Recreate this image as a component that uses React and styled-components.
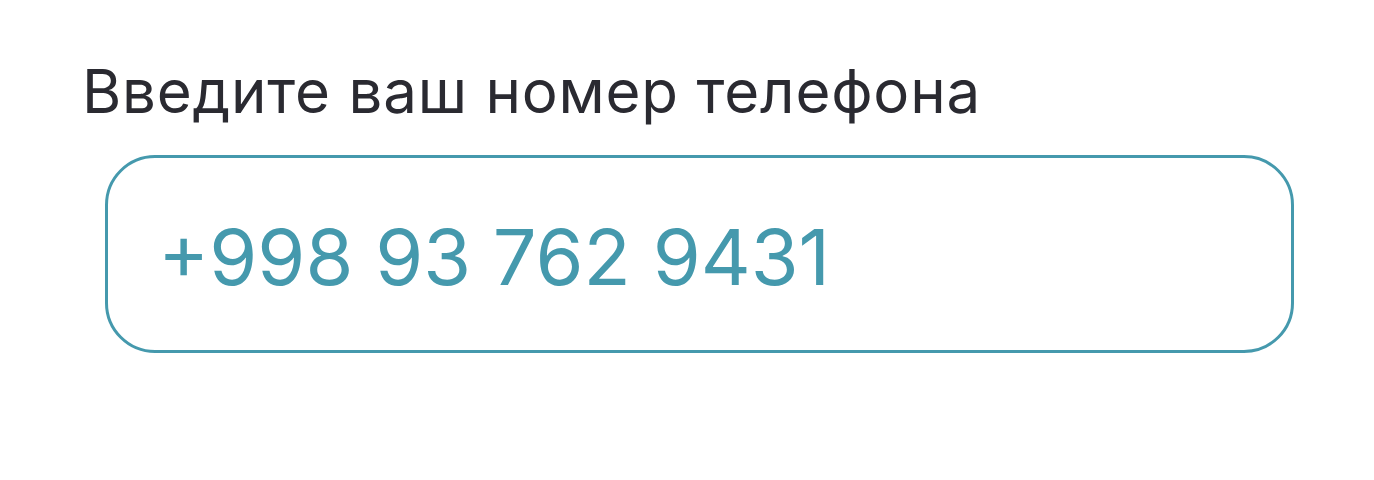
import React from "react";
import styled, { createGlobalStyle } from "styled-components";

const GlobalStyle = createGlobalStyle`
    html, body {
        margin: 0;
        padding: 0;
        background: #ffffff;
    }
    body {
        font-family: Inter, "Noto Sans", sans-serif;
    }
`;

const Wrapper = styled.div`
    display: flex;
    flex-direction: column;
    align-items: flex-start;
    padding: 55px 0 0 82px;
`;

const Label = styled.label`
    font-size: 60px;
    line-height: 72px;
    font-weight: 400;
    letter-spacing: 0.8px;
    color: #2a2a31;
`;

const PhoneField = styled.input`
    box-sizing: border-box;
    margin: 28px 0 0 23px;
    width: 1189px;
    height: 198px;
    padding: 5px 0 0 50px;
    border: 3px solid #4599ad;
    border-radius: 50px;
    background: #ffffff;
    outline: none;
    font-family: Inter, "Noto Sans", sans-serif;
    font-size: 77.5px;
    font-weight: 400;
    color: #4599ad;
`;

function App() {
    return (
        <>
            <GlobalStyle />
            <Wrapper>
                <Label htmlFor="phone">Введите ваш номер телефона</Label>
                <PhoneField id="phone" type="tel" defaultValue="+998 93 762 9431" />
            </Wrapper>
        </>
    );
}

export default App;
